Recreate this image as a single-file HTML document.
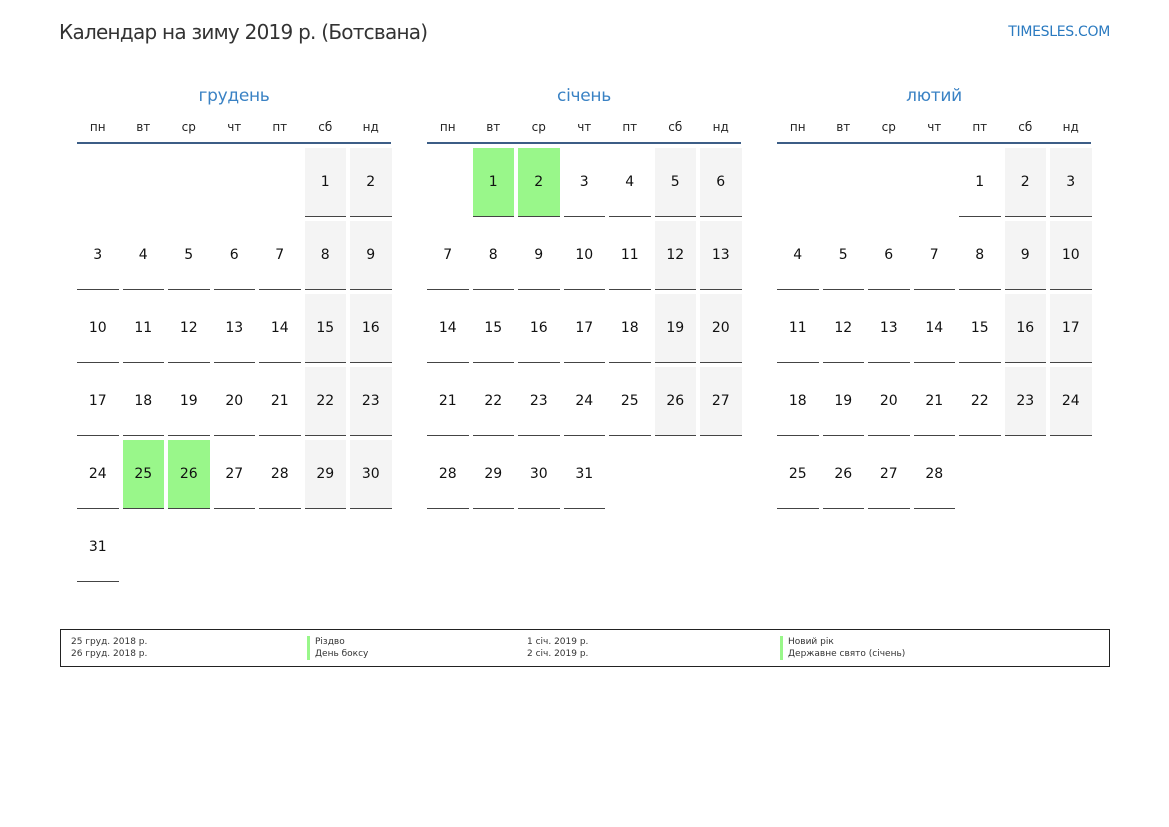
<!DOCTYPE html>
<html><head><meta charset="utf-8"><style>
body{margin:0;width:1169px;height:827px;background:#fff;font-family:"DejaVu Sans","Liberation Sans",sans-serif;position:relative;overflow:hidden}
.t{position:absolute;left:59px;top:20px;font-size:20px;color:#333;letter-spacing:-0.75px}
.s{position:absolute;right:59px;top:24px;font-size:14px;color:#2a7ac0;letter-spacing:-0.3px}
.m{position:absolute;top:85px;width:314px}
.mt{text-align:center;font-size:17px;color:#3a82c4;height:22px;line-height:22px;letter-spacing:-0.3px}
.wd{display:grid;grid-template-columns:repeat(7,41.5px);column-gap:4px;margin-top:12px;font-size:12px;color:#222;text-align:center;height:23px;line-height:16px;border-bottom:2px solid #3c5d86;width:314px}
.g{display:grid;grid-template-columns:repeat(7,41.5px);column-gap:4px;row-gap:4px;margin-top:4px}
.g div{height:68px;border-bottom:1px solid #444;text-align:center;line-height:68px;font-size:14px;color:#111}
.g .e{border-bottom:none}
.g .w{background:#f4f4f4}
.g .h{background:#99f78a}
.lg{position:absolute;left:60px;top:629px;width:1048px;height:36px;border:1px solid #222;font-size:9px;color:#333}
.lg span{position:absolute;line-height:12px}
.b{border-left:3px solid #99f78a;padding-left:5px}
</style></head><body>
<div class="t">Календар на зиму 2019 р. (Ботсвана)</div>
<div class="s">TIMESLES.COM</div>

<div class="m" style="left:77px"><div class="mt">грудень</div>
<div class="wd"><span>пн</span><span>вт</span><span>ср</span><span>чт</span><span>пт</span><span>сб</span><span>нд</span></div>
<div class="g">
<div class="e"></div><div class="e"></div><div class="e"></div><div class="e"></div><div class="e"></div><div class="w">1</div><div class="w">2</div>
<div>3</div><div>4</div><div>5</div><div>6</div><div>7</div><div class="w">8</div><div class="w">9</div>
<div>10</div><div>11</div><div>12</div><div>13</div><div>14</div><div class="w">15</div><div class="w">16</div>
<div>17</div><div>18</div><div>19</div><div>20</div><div>21</div><div class="w">22</div><div class="w">23</div>
<div>24</div><div class="h">25</div><div class="h">26</div><div>27</div><div>28</div><div class="w">29</div><div class="w">30</div>
<div>31</div>
</div></div>

<div class="m" style="left:427px"><div class="mt">січень</div>
<div class="wd"><span>пн</span><span>вт</span><span>ср</span><span>чт</span><span>пт</span><span>сб</span><span>нд</span></div>
<div class="g">
<div class="e"></div><div class="h">1</div><div class="h">2</div><div>3</div><div>4</div><div class="w">5</div><div class="w">6</div>
<div>7</div><div>8</div><div>9</div><div>10</div><div>11</div><div class="w">12</div><div class="w">13</div>
<div>14</div><div>15</div><div>16</div><div>17</div><div>18</div><div class="w">19</div><div class="w">20</div>
<div>21</div><div>22</div><div>23</div><div>24</div><div>25</div><div class="w">26</div><div class="w">27</div>
<div>28</div><div>29</div><div>30</div><div>31</div>
</div></div>

<div class="m" style="left:777px"><div class="mt">лютий</div>
<div class="wd"><span>пн</span><span>вт</span><span>ср</span><span>чт</span><span>пт</span><span>сб</span><span>нд</span></div>
<div class="g">
<div class="e"></div><div class="e"></div><div class="e"></div><div class="e"></div><div>1</div><div class="w">2</div><div class="w">3</div>
<div>4</div><div>5</div><div>6</div><div>7</div><div>8</div><div class="w">9</div><div class="w">10</div>
<div>11</div><div>12</div><div>13</div><div>14</div><div>15</div><div class="w">16</div><div class="w">17</div>
<div>18</div><div>19</div><div>20</div><div>21</div><div>22</div><div class="w">23</div><div class="w">24</div>
<div>25</div><div>26</div><div>27</div><div>28</div>
</div></div>

<div class="lg">
<span style="left:10px;top:6px">25 груд. 2018 р.</span>
<span style="left:10px;top:18px">26 груд. 2018 р.</span>
<span class="b" style="left:246px;top:6px">Різдво</span>
<span class="b" style="left:246px;top:18px">День боксу</span>
<span style="left:466px;top:6px">1 січ. 2019 р.</span>
<span style="left:466px;top:18px">2 січ. 2019 р.</span>
<span class="b" style="left:719px;top:6px">Новий рік</span>
<span class="b" style="left:719px;top:18px">Державне свято (січень)</span>
</div>
</body></html>
